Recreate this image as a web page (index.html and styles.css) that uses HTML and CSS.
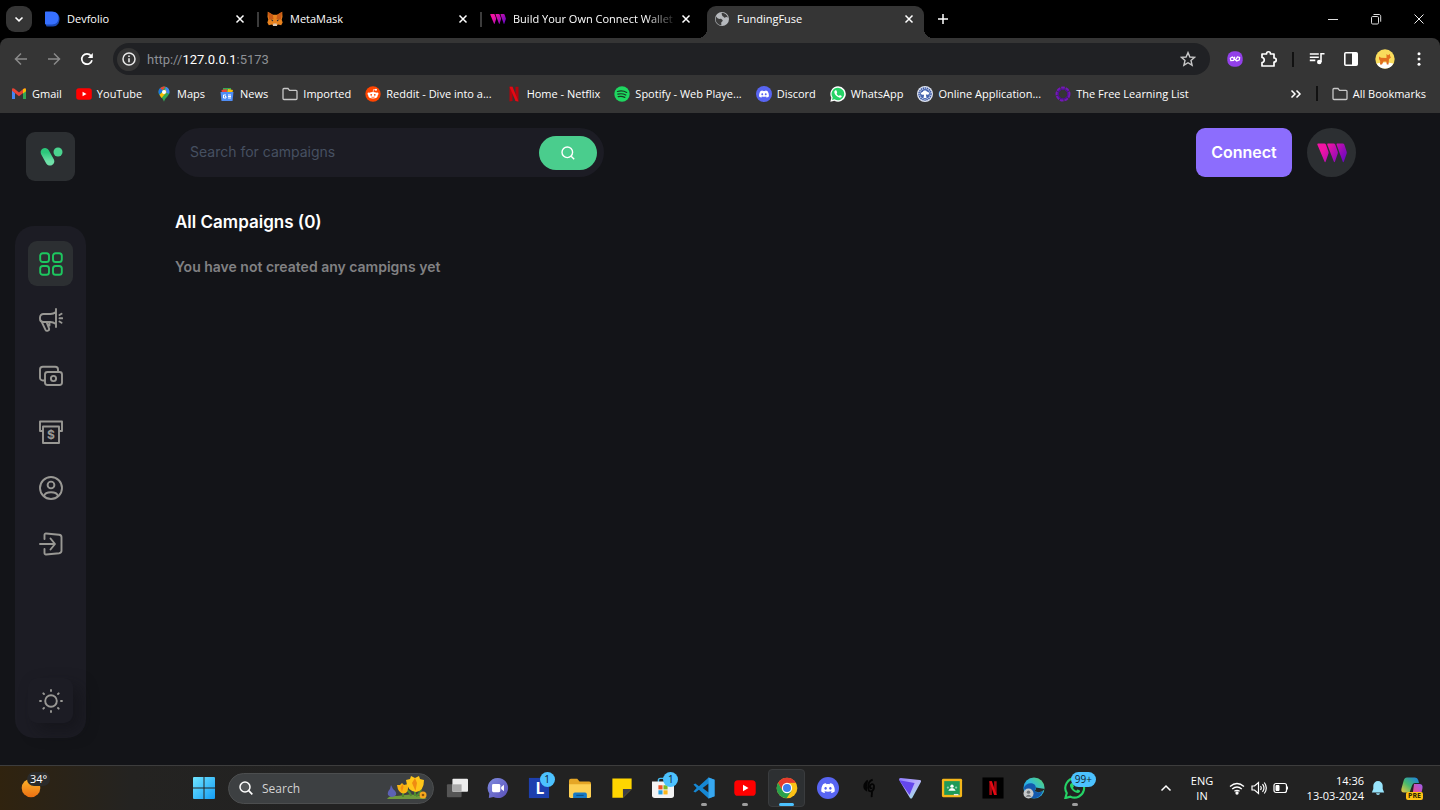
FILE: index.html
```html
<!DOCTYPE html>
<html lang="en">
<head>
<meta charset="utf-8">
<meta name="viewport" content="width=device-width, initial-scale=1">
<title>FundingFuse</title>
<link rel="stylesheet" href="styles.css">
</head>
<body>
<svg class="defs" aria-hidden="true">
  <defs>
    <linearGradient id="webg" x1="0" y1="0" x2="1" y2="1"><stop offset=".2" stop-color="#f213a4"/><stop offset="1" stop-color="#5204bf"/></linearGradient>
    <linearGradient id="webAll" gradientUnits="userSpaceOnUse" x1="3" y1="0" x2="29" y2="20"><stop offset=".2" stop-color="#f213a4"/><stop offset="1" stop-color="#5c06c4"/></linearGradient>
    <linearGradient id="vg" x1="0" y1="0" x2="0" y2="1"><stop offset="0" stop-color="#2bc77a"/><stop offset="1" stop-color="#6fe0a8"/></linearGradient>
    <linearGradient id="winG" x1="0" y1="0" x2="1" y2="1"><stop offset="0" stop-color="#6fe4ff"/><stop offset="1" stop-color="#149df5"/></linearGradient>
    <linearGradient id="moonG" x1="0" y1="0" x2="0" y2="1"><stop offset="0" stop-color="#fbb52a"/><stop offset="1" stop-color="#ec6f12"/></linearGradient>
    <linearGradient id="chatG" x1="0" y1="0" x2="1" y2="1"><stop offset="0" stop-color="#7f8cdf"/><stop offset="1" stop-color="#5a4fb8"/></linearGradient>
    <linearGradient id="edgeG" x1="0" y1="1" x2="1" y2="0"><stop offset="0" stop-color="#1479d4"/><stop offset=".5" stop-color="#2fb8e0"/><stop offset="1" stop-color="#58d868"/></linearGradient>
    <linearGradient id="copA" x1="0" y1="1" x2="1" y2="0"><stop offset="0" stop-color="#f5c83a"/><stop offset=".45" stop-color="#47b96d"/><stop offset="1" stop-color="#1b7fea"/></linearGradient>
    <linearGradient id="copB" x1="0" y1="1" x2="1" y2="0"><stop offset="0" stop-color="#f0663c"/><stop offset=".5" stop-color="#d74fa5"/><stop offset="1" stop-color="#9b5ff0"/></linearGradient>
    <linearGradient id="vpnG" x1="0" y1="0" x2="1" y2="1"><stop offset="0" stop-color="#8d7bff"/><stop offset=".5" stop-color="#b9aefc"/><stop offset="1" stop-color="#8ff0dc"/></linearGradient>
  </defs>
  <symbol id="close" viewBox="0 0 10 10"><path d="M1.500 1.500l7 7M8.500 1.500l-7 7" fill="none" stroke="currentColor" stroke-width="1.500"/></symbol>
  <symbol id="thirdweb" viewBox="0 0 30 20"><g fill="url(#webAll)"><path d="M1.500 .5h5.800c.8 0 1.300.4 1.600 1.100l2.500 6.800c.3.8.3 1.500 0 2.300l-2.800 8c-.2.600-.8.600-1 0L.4 1.700C.2 1 .7.500 1.500.5z"/><path d="M11.200.5h5.400c.8 0 1.300.4 1.600 1.100l2.500 6.800c.3.800.3 1.500 0 2.300l-2.800 8c-.2.600-.8.600-1 0L10.300 1.700c-.2-.7.200-1.200.9-1.200z"/><path d="M20.500.5h5.200c.8 0 1.300.4 1.600 1.100l2.300 6.800c.3.800.3 1.500 0 2.300l-2.800 8c-.2.600-.8.600-1 0L19.600 1.700c-.2-.7.200-1.200.9-1.200z"/></g></symbol>
  <symbol id="discord" viewBox="0 0 24 24"><circle cx="12" cy="12" r="12" fill="#5865f2"/><path fill="#fff" fill-rule="evenodd" d="M9.800 6.900C8.600 7 7.500 7.400 6.600 7.800 5 10.300 4.500 13 4.700 15.700c1.200.9 2.400 1.400 3.500 1.700l.8-1.300-1.200-.600.3-.2c2.500 1.100 5.300 1.100 7.800 0l.3.2-1.200.600.8 1.300c1.100-.3 2.300-.8 3.500-1.700.3-3-.4-5.600-1.900-7.900-.9-.4-2-.8-3.200-.9l-.5.900c-1.200-.2-2.200-.2-3.400 0zM9.400 14c-.8 0-1.400-.7-1.400-1.600s.6-1.600 1.400-1.600 1.400.7 1.400 1.600S10.200 14 9.400 14zm5.200 0c-.8 0-1.400-.7-1.400-1.600s.6-1.600 1.400-1.600 1.400.7 1.400 1.600-.6 1.600-1.400 1.600z"/></symbol>
  <symbol id="youtube" viewBox="0 0 24 18"><rect x=".3" y=".5" width="23.400" height="17" rx="4" fill="#f00"/><path d="M9.800 5.500v7l6-3.500z" fill="#fff"/></symbol>
  <symbol id="folder" viewBox="0 0 16 14"><path d="M1 2.500c0-.6.400-1 1-1h4l1.500 1.800H14c.6 0 1 .4 1 1V11.500c0 .6-.4 1-1 1H2c-.6 0-1-.4-1-1z" fill="none" stroke="#c7c7c7" stroke-width="1.300"/></symbol>
  <symbol id="phone" viewBox="0 0 24 24"><path d="M8.500 6.500c-.6 0-2 1-2 2.600 0 3.800 5 8.400 8.600 8.400 1.500 0 2.500-1.300 2.500-2.200 0-.4-2.700-1.800-3-1.600l-1.200 1.300c-1.600-.6-2.900-1.900-3.600-3.300l.9-1.200c.3-.4-.9-3.700-1.300-4z" fill="currentColor"/></symbol>
</svg>

<header class="browser">
  <div class="tabstrip">
    <button class="tab-search" aria-label="Search tabs"><svg viewBox="0 0 12 12" width="12" height="12"><path d="M2.500 4.500L6 7.800l3.500-3.300" fill="none" stroke="#fff" stroke-width="1.600"/></svg></button>
    <nav class="tabs" aria-label="Tabs">
      <div class="tab">
        <svg class="fav" viewBox="0 0 16 16"><path d="M2 2.500C2 1.500 2.500 1 3.500 1H9c4 0 6.500 3 6.500 7S13 15.500 9 15.500H3.500c-1 0-1.500-.5-1.500-1.500z" fill="#1b49b5"/><path d="M1 1.500C1 .8 1.300.5 2 .5h6c4 0 6.500 2.800 6.500 6.500S12 13.500 8 13.500H2c-.7 0-1-.3-1-1z" fill="#3770ff"/></svg>
        <button class="tab-title">Devfolio</button>
        <button class="tab-close" aria-label="Close Devfolio"><svg><use href="#close"/></svg></button>
      </div>
      <div class="tab divided">
        <svg class="fav" viewBox="0 0 16 16"><path d="M.8.8l5 3h4.400l5-3 .3 5-.8 3 1 2.700-1.500 2.700-3.200-.7-1.300 1.200H6.300L5 13.500l-3.200.7L.3 11.500l1-2.700-.8-3z" fill="#e8821e"/><path d="M.8.8l5 3L6.500 8 2 8.500zM15.200.8l-5 3L9.500 8l4.500.5z" fill="#c85a16"/><path d="M3.500 8.500l2.700.5-.4 1.500zM12.500 8.500L9.800 9l.4 1.500z" fill="#262b35"/><path d="M6.300 12.600h3.400l.4 2.300H5.900z" fill="#d9c8b8"/></svg>
        <button class="tab-title">MetaMask</button>
        <button class="tab-close" aria-label="Close MetaMask"><svg><use href="#close"/></svg></button>
      </div>
      <div class="tab divided">
        <svg class="fav"><use href="#thirdweb"/></svg>
        <button class="tab-title faded">Build Your Own Connect Wallet</button>
        <button class="tab-close" aria-label="Close Build Your Own Connect Wallet"><svg><use href="#close"/></svg></button>
      </div>
      <div class="tab active">
        <svg class="fav" viewBox="0 0 16 16"><circle cx="8" cy="8" r="7" fill="#b6b9bd"/><path d="M2.200 5.500c1.500 2.300 3 2.700 4.800 2.300.8 1 1.800.7 1.700 2-.1 1-1.500.8-1.500 2.200 0 .8.300 1.500.2 2.200C4 14 1.700 11.500 1.700 8zM8 1.700c-1 1.300.2 1.500.2 2.700 0 1 1 .6 1.500 1.600.4.900 1.300.8 2 .3.600-.5 1.300 0 2.200.2C13.300 3.800 11 1.800 8 1.700z" fill="#3c3c3c"/></svg>
        <button class="tab-title" aria-current="page">FundingFuse</button>
        <button class="tab-close" aria-label="Close FundingFuse"><svg><use href="#close"/></svg></button>
      </div>
    </nav>
    <button class="new-tab" aria-label="New tab"><svg viewBox="0 0 12 12" width="12" height="12"><path d="M6 1v10M1 6h10" stroke="#fff" stroke-width="1.500"/></svg></button>
    <div class="window-controls">
      <button aria-label="Minimize"><svg viewBox="0 0 12 12" width="12" height="12"><path d="M1 6.500h10" stroke="#ddd"/></svg></button>
      <button aria-label="Restore"><svg viewBox="0 0 12 12" width="12" height="12" fill="none" stroke="#ddd"><rect x="1.500" y="3.500" width="7" height="7.500" rx="1.200"/><path d="M3.500 1.500H9c1 0 1.700.7 1.700 1.700v5.500"/></svg></button>
      <button aria-label="Close window"><svg viewBox="0 0 12 12" width="12" height="12"><path d="M1.500 1.500l9 9M10.500 1.500l-9 9" stroke="#eee"/></svg></button>
    </div>
  </div>

  <div class="toolbar">
    <button class="tool dim" aria-label="Back"><svg viewBox="0 0 14 14" width="14" height="14"><path d="M13 7H2M7 1.500L1.500 7 7 12.500" fill="none" stroke="currentColor" stroke-width="1.500"/></svg></button>
    <button class="tool dim" aria-label="Forward"><svg viewBox="0 0 14 14" width="14" height="14"><path d="M1 7h11M7 1.500L12.500 7 7 12.500" fill="none" stroke="currentColor" stroke-width="1.500"/></svg></button>
    <button class="tool" aria-label="Reload"><svg viewBox="0 0 14 14" width="14" height="14"><path d="M12 8.300A5.200 5.200 0 1 1 11 3.700" fill="none" stroke="#fff" stroke-width="1.700"/><path d="M12.800 1v5H7.800z" fill="#fff"/></svg></button>
    <div class="omnibox">
      <button class="site-info" aria-label="Site information"><svg viewBox="0 0 14 14" width="14" height="14"><circle cx="7" cy="7" r="6" fill="none" stroke="#e8e8e8" stroke-width="1.500"/><path d="M7 6.200v4M7 3.600v1.500" stroke="#e8e8e8" stroke-width="1.600"/></svg></button>
      <div class="url" role="textbox" contenteditable="true" spellcheck="false" aria-label="Address">http://<span class="host">127.0.0.1</span>:5173</div>
      <button class="star" aria-label="Bookmark"><svg viewBox="0 0 16 16" width="16" height="16"><path d="M8 1.600l1.900 4.400 4.700.4L11 9.500l1.100 4.700L8 11.700l-4.100 2.500L5 9.500 1.400 6.400l4.700-.4z" fill="none" stroke="#c7c7c7" stroke-width="1.400"/></svg></button>
    </div>
    <div class="extensions">
      <button aria-label="Polygon extension"><svg viewBox="0 0 16 16" width="16" height="16"><rect x=".3" y=".3" width="15.400" height="15.400" rx="6.500" fill="#9340ea"/><path d="M7.800 5.800L6.600 9.500 3.800 9.700 3.300 7.200 5.300 6l4.500 4 2.600-1.200.2-2.300-2.200-.6-2.200 3.700" fill="none" stroke="#fff" stroke-width="1.200"/></svg></button>
      <button aria-label="Extensions"><svg viewBox="0 0 18 18" width="18" height="18"><path d="M2 4h4.500c0-3 4-3 4 0H14v4c3 0 3 4 0 4v4H2v-3.500c3-.3 3-4.700 0-5z" fill="none" stroke="#fff" stroke-width="1.700" stroke-linejoin="round"/></svg></button>
      <span class="rule"></span>
      <button aria-label="Media controls"><svg viewBox="0 0 16 16" width="16" height="16"><path d="M.8 3h9M.8 6.200h9M.8 9.400h5.500M12 11V2.700h3.500" fill="none" stroke="#fff" stroke-width="1.600"/><circle cx="10.300" cy="11" r="2.300" fill="#fff"/></svg></button>
      <button aria-label="Side panel"><svg viewBox="0 0 16 16" width="16" height="16"><rect x="1.800" y="1.800" width="12.400" height="12.400" rx="1" fill="none" stroke="#fff" stroke-width="1.600"/><path d="M9 2h5v12H9z" fill="#fff"/></svg></button>
      <button aria-label="Profile"><svg viewBox="0 0 20 20" width="20" height="20"><circle cx="10" cy="10" r="9.700" fill="#f9dc5c"/><path d="M1.500 14.500a9.700 9.700 0 0 0 17 0c-4-1.500-13-1.500-17 0z" fill="#fff"/><path d="M4 7.500l2 1.300 5.500.2V5l1.500 1.200L15 5v2l1 1.500-2 1.500-.5 5.500h-1.700l-.5-3H8.500L7 15.500H5L5.200 12 4 10z" fill="#e2701f"/></svg></button>
      <button aria-label="Menu"><svg viewBox="0 0 16 16" width="16" height="16" fill="#fff"><circle cx="8" cy="2.800" r="1.500"/><circle cx="8" cy="8" r="1.500"/><circle cx="8" cy="13.200" r="1.500"/></svg></button>
    </div>
  </div>

  <nav class="bookmarks" aria-label="Bookmarks">
    <a href="#"><svg viewBox="0 0 16 16"><path d="M1 4v9h3V7z" fill="#4285f4"/><path d="M15 4v9h-3V7z" fill="#34a853"/><path d="M1 3.500C1 2 2.500 2 3.500 2.800L8 6.500l4.500-3.700c1-.8 2.500-.8 2.500.7v1.300L8 10.200 1 4.800z" fill="#ea4335"/><path d="M12 3.300c1.500-1.200 3-.9 3 .7v1.200l-3 2.300z" fill="#fbbc04"/></svg>Gmail</a>
    <a href="#"><svg><use href="#youtube"/></svg>YouTube</a>
    <a href="#"><svg viewBox="0 0 16 16"><path d="M8 .5a5.500 5.500 0 0 0-5.500 5.700c0 3.500 4.200 5 5.500 9.500 1.300-4.500 5.500-6 5.500-9.500A5.500 5.500 0 0 0 8 .5z" fill="#34a853"/><path d="M4 2.300A5.500 5.500 0 0 1 9.500.7L6 4.800z" fill="#ea4335"/><path d="M4 2.300C2 4.300 2.200 6.800 3.500 8.800L7 4.600z" fill="#1a73e8"/><path d="M9.600.8c3 .8 4.500 4 3.500 7L9 6.500z" fill="#4285f4"/><path d="M3.500 8.800l6-5.500 1 3L5.500 12z" fill="#fbbc04"/><circle cx="8" cy="6" r="2" fill="#fff"/></svg>Maps</a>
    <a href="#"><svg viewBox="0 0 16 16"><path d="M4 2h8v5H4z" fill="#34a853"/><path d="M9 3l5 1-1 4H8z" fill="#fbbc04"/><path d="M2.500 4l5-1 1 5H3z" fill="#ea4335"/><path d="M1.500 6h13l-1 9h-11z" fill="#4f8df5"/><path d="M7 9H4.500v3H7v-1.500H6M9 9h3M9 10.500h3M9 12h3" fill="none" stroke="#fff"/></svg>News</a>
    <a href="#"><svg><use href="#folder"/></svg>Imported</a>
    <a href="#"><svg viewBox="0 0 16 16"><circle cx="8" cy="8" r="7.700" fill="#ff4500"/><ellipse cx="8" cy="9.300" rx="4.700" ry="3.200" fill="#fff"/><circle cx="3.700" cy="7.800" r="1.200" fill="#fff"/><circle cx="12.300" cy="7.800" r="1.200" fill="#fff"/><circle cx="11" cy="3.800" r="1" fill="#fff"/><path d="M8 6.500l.6-3 2.200.4" fill="none" stroke="#fff" stroke-width=".7"/><circle cx="6.200" cy="8.800" r=".9" fill="#ff4500"/><circle cx="9.800" cy="8.800" r=".9" fill="#ff4500"/><path d="M6.300 11q1.700.9 3.400 0" fill="none" stroke="#ff4500" stroke-width=".7"/></svg>Reddit - Dive into a...</a>
    <a href="#"><svg viewBox="0 0 16 16"><path d="M3.500.8h3V15l-3 .5zM9.500.8h3v14.700L9.500 15z" fill="#b1060f"/><path d="M3.500.8h3l6 14.700-3-.5z" fill="#e50914"/></svg>Home - Netflix</a>
    <a href="#"><svg viewBox="0 0 16 16"><circle cx="8" cy="8" r="7.700" fill="#1ed760"/><path d="M3.400 5.500c3-.9 6.600-.6 9.300.9M3.800 8.200c2.700-.8 5.600-.5 8 .8M4.200 10.700c2.300-.6 4.600-.4 6.600.7" fill="none" stroke="#173b22" stroke-width="1.200" stroke-linecap="round"/></svg>Spotify - Web Playe...</a>
    <a href="#"><svg><use href="#discord"/></svg>Discord</a>
    <a href="#"><svg viewBox="0 0 24 24"><path d="M12 .5A11.500 11.500 0 0 0 2 17.700L.5 23.500l6-1.500A11.500 11.500 0 1 0 12 .5z" fill="#fff"/><path d="M12 2.500A9.500 9.500 0 0 0 4 17.300L3 21l3.700-1A9.500 9.500 0 1 0 12 2.500z" fill="#25d366"/><use href="#phone" color="#fff"/></svg>WhatsApp</a>
    <a href="#"><svg viewBox="0 0 16 16"><circle cx="8" cy="8" r="8" fill="#dfe5f2"/><circle cx="8" cy="8" r="6" fill="none" stroke="#3c58a6" stroke-width="1.500" stroke-dasharray="1.500 .6"/><circle cx="8" cy="8" r="5" fill="#4563ae"/><path d="M3.800 8c0-1.500 1.500-2 2-2 .5-1.700 3.500-2 4.200-.2 1.500-.2 2.300 1 2.200 2.200-1 1-2.500.6-3.300.6L9.500 12h-3l.6-3.300c-1 0-2.500.2-3.300-.7z" fill="#fff"/></svg>Online Application...</a>
    <a href="#"><svg viewBox="0 0 16 16"><circle cx="8" cy="8" r="6" fill="none" stroke="#7417b8" stroke-width="3" stroke-dasharray="3.500 .8"/><circle cx="8" cy="8" r="5" fill="none" stroke="#4b1190" stroke-width="1.200"/></svg>The Free Learning List</a>
    <div class="bookmarks-end">
      <button aria-label="More bookmarks"><svg viewBox="0 0 12 12" width="12" height="12"><path d="M1.500 2.500L5 6 1.500 9.500M6.500 2.500L10 6 6.500 9.500" fill="none" stroke="#fff" stroke-width="1.500"/></svg></button>
      <span class="rule"></span>
      <a href="#"><svg><use href="#folder"/></svg>All Bookmarks</a>
    </div>
  </nav>
</header>

<div class="app">
  <aside class="side">
    <a class="logo" href="#" aria-label="Home"><svg viewBox="0 0 24 20" width="24" height="20"><path d="M6 5.300l5 9" stroke="url(#vg)" stroke-width="8.600" stroke-linecap="round"/><circle cx="19" cy="5" r="4.500" fill="#4bd38f"/></svg></a>
    <nav class="rail" aria-label="Main">
      <a class="tile on" href="#" aria-label="Dashboard"><svg viewBox="0 0 24 24"><rect x="1.200" y="1.200" width="8.800" height="8.800" rx="2.600"/><rect x="14" y="1.200" width="8.800" height="8.800" rx="2.600"/><rect x="1.200" y="14" width="8.800" height="8.800" rx="2.600"/><rect x="14" y="14" width="8.800" height="8.800" rx="2.600"/></svg></a>
      <a class="tile" href="#" aria-label="Campaigns"><svg viewBox="0 0 24 24"><path d="M17 1v18M17 4c-2 1.500-3.500 2-5.500 2H4.500C2.500 6 1 7.500 1 9.500v1.500C1 13 2.500 14 4.500 14h7c2 0 3.500.7 5.500 2M2.500 13.500l4 8.300c1 2 4.300.8 3.500-1.500L7.500 14M10.500 14v3.500l-2.200-1.500M20.500 7l2-1.200M20.500 10.300h2.800M20.500 13.500l2 1.200"/></svg></a>
      <a class="tile" href="#" aria-label="Payment"><svg viewBox="0 0 24 24"><path d="M6 16.500H3.800C2.200 16.500 1 15.300 1 13.700V5.500C1 4 2.200 2.700 3.800 2.700h12.500C17.800 2.700 19 4 19 5.500V8"/><rect x="6" y="8" width="17" height="13" rx="2.500"/><circle cx="14.500" cy="14.500" r="2.600"/></svg></a>
      <a class="tile" href="#" aria-label="Withdraw"><svg viewBox="0 0 24 24"><path d="M4 11H1V1.500h22V11h-3M4 6.500h16V23H4z"/><text x="12" y="19">$</text></svg></a>
      <a class="tile" href="#" aria-label="Profile"><svg viewBox="0 0 24 24"><circle cx="12" cy="12" r="11"/><circle cx="12" cy="9" r="3.400"/><path d="M5 20c1.500-5 12.500-5 14 0"/></svg></a>
      <a class="tile" href="#" aria-label="Logout"><svg viewBox="0 0 24 24"><path d="M5.500 7V3c0-1 .6-1.600 1.600-1.500l13 1.300c1.500.2 2.400 1 2.400 2.400v13.600c0 1.400-.9 2.200-2.400 2.400l-13 1.300c-1 .1-1.600-.5-1.600-1.500v-4M1 12h14.500M11.500 6.500L16 12l-4.500 5.500"/></svg></a>
      <button class="tile theme" aria-label="Toggle theme"><svg viewBox="0 0 24 24"><circle cx="12" cy="12" r="5.800"/><path d="M12 1v1M12 22v1M1 12h1M22 12h1M4.300 4.300l.7.7M19 19l.7.7M4.300 19.700L5 19M19 5l.7-.7"/></svg></button>
    </nav>
  </aside>
  <main class="content">
    <div class="topbar">
      <form class="search" role="search">
        <input type="text" placeholder="Search for campaigns" aria-label="Search for campaigns">
        <button type="button" aria-label="Search"><svg viewBox="0 0 14 14" width="14" height="14"><circle cx="6.300" cy="6.300" r="5.300" fill="none" stroke="#fff" stroke-width="1.400"/><path d="M10.200 10.200l3 3" stroke="#fff" stroke-width="1.400"/></svg></button>
      </form>
      <div class="account">
        <button class="connect">Connect</button>
        <a class="avatar" href="#" aria-label="Profile"><svg width="30" height="20"><use href="#thirdweb"/></svg></a>
      </div>
    </div>
    <h1>All Campaigns (0)</h1>
    <p>You have not created any campigns yet</p>
  </main>
</div>

<footer class="taskbar">
  <button class="weather" aria-label="Weather"><svg viewBox="0 0 20 20" width="20" height="20"><circle cx="10" cy="10" r="9.300" fill="url(#moonG)"/></svg><span class="temp">34°</span></button>
  <button class="start" aria-label="Start"><svg viewBox="0 0 22 22" width="22" height="22" fill="url(#winG)"><path d="M0 1Q0 0 1 0h9.500v10.500H0zM11.500 0H21q1 0 1 1v9.500H11.500zM0 11.500h10.500V22H1q-1 0-1-1zM11.500 11.500H22V21q0 1-1 1h-9.500z"/></svg></button>
  <label class="os-search">
    <svg viewBox="0 0 14 14" width="14" height="14"><circle cx="6" cy="6" r="5" fill="#55585a" stroke="#fff" stroke-width="1.500"/><path d="M9.700 9.700l3.600 3.600" stroke="#fff" stroke-width="1.700"/></svg>
    <input type="text" placeholder="Search" aria-label="Search">
    <svg viewBox="0 0 40 24" width="40" height="24"><path d="M0 23q3-4 10-3l8-1q10-2 22 4z" fill="#6f9a3c"/><path d="M16 21V14M28 20V11M24 20q-1-5-5-6M29 20q4-2 5-7" stroke="#4f8a2e" stroke-width="2" fill="none"/><path d="M10 9l3 0 2-2 2 2 4-1q1 9-4 9.500-6 0-7-8.500z" fill="#f9b512"/><path d="M19 4l4-1 1-3 4 2 4-2 1 3 4 1q0 11-8 12-9-1-10-12z" fill="#ffc61a"/><path d="M28 2l2 5-1.500 8L25 7zM15.500 8l1 3-1.500 5-1.500-4z" fill="#f08c12"/><path d="M4 9l2 4q4 3 3 6-4 4-8 0-1-3 2-6z" fill="#5d62b4"/><circle cx="36" cy="19" r="3.500" fill="#f6a81c"/><circle cx="36" cy="19" r="1.300" fill="#8b5410"/></svg>
  </label>
  <nav class="apps" aria-label="Pinned apps">
    <button aria-label="Task view"><svg viewBox="0 0 24 24"><rect x="1" y="8" width="16" height="14" rx="1" fill="#555"/><rect x="7" y="2" width="17" height="14" rx="1" fill="#ededed"/><path d="M7 8h10v8H7z" fill="#aaa"/></svg></button>
    <button aria-label="Chat"><svg viewBox="0 0 24 24"><path d="M12 1a11 11 0 1 1-5 20.800L2 23l.5-5A11 11 0 0 1 12 1z" fill="url(#chatG)"/><rect x="5.500" y="7.500" width="9" height="9" rx="1.500" fill="#fff"/><path d="M15.500 11l3-2.500v7l-3-2.500z" fill="#fff"/></svg></button>
    <button aria-label="Lenovo"><svg viewBox="0 0 24 24"><path d="M1 1h22v22H1z" fill="#1d3fae"/><text class="ell" x="13" y="18">L</text></svg><span class="badge">1</span></button>
    <button aria-label="File Explorer"><svg viewBox="0 0 24 24"><path d="M0 4q0-2 2-2h7l2.500 3H22q2 0 2 2v14H0z" fill="#e5a626"/><path d="M0 8h24v13q0 2-2 2H2q-2 0-2-2z" fill="#fdd054"/><path d="M4.500 23v-4q0-2 2-2h11q2 0 2 2v4z" fill="#1679c5"/><path d="M8 20h8" stroke="#0b4776"/></svg></button>
    <button aria-label="Sticky Notes"><svg viewBox="0 0 24 24"><path d="M1.500 1.500h21v11.500l-9.500 9.500H1.500z" fill="#ffd500"/><path d="M13 13h9.500L13 22.500z" fill="#3b3c48"/></svg></button>
    <button aria-label="Store"><svg viewBox="0 0 24 24"><path d="M7 6V3.500Q7 1.500 9 1.500h6q2 0 2 2V6" fill="none" stroke="#43bdf2" stroke-width="1.600"/><path d="M0 5h24v15q0 3-3 3H3q-3 0-3-3z" fill="#f3f3f3"/><path d="M7 9h4.500v4.500H7z" fill="#ed5126"/><path d="M12.500 9H17v4.500h-4.500z" fill="#7cba27"/><path d="M7 14.500h4.500V19H7z" fill="#239fe2"/><path d="M12.500 14.500H17V19h-4.500z" fill="#fbb61a"/></svg><span class="badge">1</span></button>
    <button class="running" aria-label="Visual Studio Code"><svg viewBox="0 0 24 24"><path d="M17 .5L23.500 3v18L17 23.500 6.500 14 2.500 17 .5 15.800 4 12 .5 8.200 2.500 7l4 3zM17 7l-6.500 5 6.500 5z" fill="#1688d4" fill-rule="evenodd"/><path d="M17 .5L23.500 3v18L17 23.500z" fill="#37a7ef"/></svg></button>
    <button class="running" aria-label="YouTube"><svg><use href="#youtube"/></svg></button>
    <button class="running current" aria-label="Chrome"><svg viewBox="0 0 24 24"><circle cx="12" cy="12" r="11.300" fill="#fbc116"/><path d="M2.200 6.400A11.300 11.300 0 0 1 21.800 6.400L12 6.500l-5 8.300z" fill="#e53b2d"/><path d="M2.200 6.400A11.300 11.300 0 0 0 11.500 23.300L17 15 7 14.800z" fill="#2aa14c"/><circle cx="12" cy="12" r="5.600" fill="#fff"/><circle cx="12" cy="12" r="4.400" fill="#3b7ded"/></svg></button>
    <button aria-label="Discord"><svg><use href="#discord"/></svg></button>
    <button aria-label="Quill"><svg viewBox="0 0 24 24"><path d="M10 3q-5 4-4 9 1 3 4 4-1-7 1-12z" fill="#040404"/><path d="M16 3c-5 1-6 9-4 12 3 2 6-1 5.500-5S13 8 13 10.500s2 2 2 1M15 15c1 2-.5 4 0 7" fill="none" stroke="#040404" stroke-width="2"/></svg></button>
    <button aria-label="VPN"><svg viewBox="0 0 24 24"><path d="M2 1l20.500 2.200q2.500.3 1.200 2.500L14.500 22.500q-1.300 2-2.700 0L.3 3.500Q-.5 1 2 1z" fill="url(#vpnG)"/><path d="M.3 3.500L17 6.500l-5.500 13z" fill="#6446ec"/></svg></button>
    <button aria-label="Classroom"><svg viewBox="0 0 24 24"><rect x="1" y="2" width="22" height="20" rx="1.500" fill="#f4b61a"/><path d="M3.500 4.500h17v15h-17z" fill="#1e9a58"/><circle cx="12" cy="10" r="1.800" fill="#fff"/><path d="M8 15q1-3 4-3t4 3z" fill="#fff"/><circle cx="7.500" cy="11.500" r="1.200" fill="#8fd0ae"/><circle cx="16.500" cy="11.500" r="1.200" fill="#8fd0ae"/><path d="M14 18.500h5v1.500h-5z" fill="#e8e8e8"/></svg></button>
    <button aria-label="Netflix"><svg viewBox="0 0 24 24"><path d="M.5.5h23v23H.5z" fill="#000"/><path d="M8 4.500h2.800v15H8zM13.200 4.500H16v15h-2.800z" fill="#a7070f"/><path d="M8 4.500h2.800L16 19.500h-2.800z" fill="#e50914"/></svg></button>
    <button aria-label="Edge"><svg viewBox="0 0 24 24"><circle cx="12" cy="12" r="11.500" fill="url(#edgeG)"/><path d="M1 12c2-7 13-7 13-.5 0 2-1.500 2.500-1 3.500 1.500 2.500 7 2 9-.3C19.500 23 12 25 6 21z" fill="#1359ad"/><path d="M14 11.500c.5 3-1.500 3-1 3.500 2 2.500 7 2 10-1l1-1z" fill="#272727"/><circle cx="6" cy="18" r="5.500" fill="#c5c8ca"/><circle cx="6" cy="16.500" r="1.900" fill="#6d7174"/><path d="M2.800 21.500q3.200-4.500 6.400 0z" fill="#6d7174"/></svg></button>
    <button class="running" aria-label="WhatsApp"><svg viewBox="0 0 24 24"><path d="M12 1.500A10.500 10.500 0 0 0 3 17.500L1.500 23l5.500-1.500A10.500 10.500 0 1 0 12 1.500z" fill="none" stroke="#25d366" stroke-width="2.300"/><use href="#phone" color="#25d366"/></svg><span class="badge wide">99+</span></button>
  </nav>
  <div class="tray">
    <button class="chevron" aria-label="Hidden icons"><svg viewBox="0 0 12 12" width="12" height="12"><path d="M1.500 8.500L6 4l4.500 4.500" fill="none" stroke="#fff" stroke-width="1.500"/></svg></button>
    <button class="lang">ENG<br>IN</button>
    <button class="status" aria-label="Network, volume and battery">
      <svg viewBox="0 0 16 16" width="16" height="16" fill="none" stroke="#fff" stroke-width="1.300"><path d="M1 6.500q7-6 14 0M3.200 9q4.800-4 9.600 0M5.400 11.300q2.600-2 5.200 0"/><circle cx="8" cy="13" r="1" fill="#fff"/></svg>
      <svg viewBox="0 0 16 16" width="16" height="16" fill="none" stroke="#fff" stroke-width="1.200"><path d="M1 6v4h2.500L7.500 13.500v-11L3.500 6zM9.500 6q1.500 2 0 4M11.500 4.200q3 3.800 0 7.600M13.300 2.500q4 5.500 0 11"/></svg>
      <svg viewBox="0 0 16 16" width="16" height="16"><rect x="1" y="3.500" width="12.500" height="9" rx="2" fill="none" stroke="#fff" stroke-width="1.200"/><path d="M3 5.500h3v5H3zM14.500 6.500v3" fill="#fff" stroke="#fff"/></svg>
    </button>
    <button class="clock"><time datetime="2024-03-13T14:36">14:36<br>13-03-2024</time></button>
    <button class="bell" aria-label="Notifications"><svg viewBox="0 0 14 16" width="14" height="16"><path d="M7 1a4.700 4.700 0 0 0-4.700 4.700V9L.8 12.500h12.400L11.700 9V5.700A4.700 4.700 0 0 0 7 1zM5 13.300h4Q8.800 15 7 15T5 13.300z" fill="#98e4fc"/></svg></button>
    <button class="copilot" aria-label="Copilot"><svg viewBox="0 0 24 24" width="24" height="24"><path d="M7 1.500h8q2.500 0 3.200 2.500l.8 3h-4q-2 0-2.700 2L9.500 16.500H4q-3.500 0-2.500-4l2.200-8Q4.500 1.500 7 1.500z" fill="url(#copA)"/><path d="M14 8h5.500q3.500 0 3 4l-1.500 7q-.7 3-3.500 3h-8q2.500-.5 3-3z" fill="url(#copB)"/></svg><span class="pre">PRE</span></button>
  </div>
</footer>
</body>
</html>
```

FILE: styles.css
```css
* { box-sizing: border-box; }

body {
  margin: 0;
  min-height: 100vh;
  display: flex;
  flex-direction: column;
  background: #131418;
  color: #fff;
  font-family: "Open Sans", "Noto Sans", sans-serif;
  font-size: 11px;
}

button {
  display: flex;
  align-items: center;
  justify-content: center;
  padding: 0;
  border: 0;
  background: none;
  color: inherit;
  font: inherit;
}

a { color: inherit; text-decoration: none; }
svg { display: block; flex: none; }
.defs { position: absolute; width: 0; height: 0; }

/* Browser window */
.browser { background: #000; }

.tabstrip { display: flex; height: 38px; padding-left: 6px; }
.tab-search {
  width: 26px;
  height: 26px;
  margin-top: 6px;
  border-radius: 9px;
  background: #353535;
}
.tabs { display: flex; margin-left: 2px; }
.tab {
  position: relative;
  display: flex;
  align-items: center;
  width: 223px;
  padding: 0 9px 1px 10px;
}
.tab .fav { width: 16px; height: 16px; margin-right: 7px; }
.tab.divided::before {
  content: "";
  position: absolute;
  left: 0;
  top: 12px;
  width: 2px;
  height: 15px;
  background: #3c3c3c;
}
.tab-title {
  flex: 1;
  min-width: 0;
  justify-content: flex-start;
  white-space: nowrap;
}
.tab-title.faded {
  -webkit-mask-image: linear-gradient(90deg, #000 80%, transparent);
  mask-image: linear-gradient(90deg, #000 80%, transparent);
}
.tab-close { width: 16px; height: 16px; }
.tab-close svg { width: 10px; height: 10px; }
.tab.active {
  width: 217px;
  margin: 6px 0 0 4px;
  padding: 0 7px 7px 7px;
  border-radius: 9px 9px 0 0;
  background: #353535;
}
.tab.active::before,
.tab.active::after {
  content: "";
  position: absolute;
  bottom: 0;
  width: 9px;
  height: 9px;
}
.tab.active::before { right: 100%; background: radial-gradient(circle at 0 0, #000 9px, #353535 9px); }
.tab.active::after { left: 100%; background: radial-gradient(circle at 100% 0, #000 9px, #353535 9px); }
.new-tab { width: 38px; }
.window-controls { display: flex; margin-left: auto; }
.window-controls button { width: 43px; }

.toolbar {
  display: flex;
  align-items: center;
  height: 42px;
  padding: 0 8px 0 4px;
  border-radius: 8px 8px 0 0;
  background: #353535;
}
.tool { width: 33px; height: 32px; color: #fff; }
.tool.dim { color: #8a8a8a; }
.omnibox {
  display: flex;
  flex: 1;
  align-items: center;
  height: 32px;
  margin-left: 10px;
  padding: 0 14px 0 4px;
  border-radius: 16px;
  background: #202124;
}
.site-info { width: 23px; height: 23px; border-radius: 50%; background: #353535; }
.url { flex: 1; margin-left: 7px; color: #8d9095; font: 13px Roboto, sans-serif; outline: none; }
.host { color: #fff; }
.extensions { display: flex; align-items: center; gap: 8px; margin-left: 12px; }
.extensions button { width: 26px; height: 28px; }
.rule { width: 2px; height: 15px; background: #111; }
.extensions .rule { margin: 0 2px; }

.bookmarks {
  display: flex;
  align-items: center;
  gap: 14px;
  height: 33px;
  padding: 0 14px 6px 11px;
  background: #353535;
  white-space: nowrap;
}
.bookmarks a { display: flex; align-items: center; gap: 5px; }
.bookmarks a svg { width: 16px; height: 16px; }
.bookmarks-end { display: flex; align-items: center; gap: 14px; margin-left: auto; }

/* Application */
.app {
  display: flex;
  flex: 1;
  gap: 89px;
  padding: 15px 84px 27px 15px;
  font-family: Inter, "Open Sans", sans-serif;
}
.side { display: flex; flex-direction: column; align-items: center; width: 71px; }
.logo {
  display: flex;
  align-items: center;
  justify-content: center;
  width: 49px;
  height: 49px;
  margin: 4px 0 45px;
  border-radius: 9px;
  background: #2c2f32;
}
.rail {
  display: flex;
  flex: 1;
  flex-direction: column;
  align-items: center;
  gap: 11px;
  width: 100%;
  padding: 15px 0;
  border-radius: 19px;
  background: #1c1c24;
}
.tile {
  display: flex;
  align-items: center;
  justify-content: center;
  width: 45px;
  height: 45px;
  border-radius: 9px;
  color: #999894;
}
.tile svg {
  width: 24px;
  height: 24px;
  fill: none;
  stroke: currentColor;
  stroke-width: 1.9px;
  stroke-linecap: round;
  stroke-linejoin: round;
}
.tile text { fill: currentColor; stroke: none; font-size: 12px; font-weight: 700; text-anchor: middle; }
.tile.on { background: #2c2f32; color: #1dc75f; }
.tile.theme { margin-top: auto; background: #1c1c24; box-shadow: 8px 8px 16px rgba(16, 16, 20, .5); }

.content { flex: 1; min-width: 0; }
.topbar { display: flex; justify-content: space-between; }
.search {
  display: flex;
  align-items: center;
  flex: 0 1 429px;
  height: 49px;
  padding: 0 7px 0 15px;
  border-radius: 25px;
  background: #1c1c24;
}
.search input {
  flex: 1;
  min-width: 0;
  padding: 0 0 2px;
  border: 0;
  outline: 0;
  background: none;
  color: #fff;
  font: 14px Inter, sans-serif;
}
.search input::placeholder { color: #465061; }
.search button { width: 58px; height: 34px; border-radius: 17px; background: #4acd8d; }
.account { display: flex; gap: 15px; }
.connect {
  width: 96px;
  height: 49px;
  padding-bottom: 2px;
  border-radius: 9px;
  background: #8c6dfd;
  font-size: 16px;
  font-weight: 600;
}
.avatar {
  display: flex;
  align-items: center;
  justify-content: center;
  width: 49px;
  height: 49px;
  border-radius: 50%;
  background: #2c2f32;
}
.content h1 { margin: 33px 0 0; font-size: 17px; font-weight: 600; line-height: 24px; }
.content p { margin: 21px 0 0; color: #818183; font-size: 14px; font-weight: 600; line-height: 24px; }

/* Desktop taskbar */
.taskbar {
  display: flex;
  align-items: center;
  height: 45px;
  padding: 0 16px;
  border-top: 1px solid #3d3d3d;
  background: linear-gradient(90deg, #30230f, #242321 130px, #222 300px);
}
.weather { position: relative; width: 30px; height: 40px; }
.temp {
  position: absolute;
  left: 11px;
  top: 4px;
  padding: 0 3px;
  border-radius: 7px;
  background: #2b2b2b;
  font-size: 11px;
  line-height: 14px;
}
.start { width: 22px; margin-left: 147px; }
.os-search {
  display: flex;
  align-items: center;
  gap: 9px;
  width: 206px;
  height: 31px;
  margin-left: 13px;
  padding: 0 6px 0 10px;
  border: 1px solid #4c4e4f;
  border-radius: 16px;
  background: #3d4042;
}
.os-search input {
  flex: 1;
  min-width: 0;
  padding: 0;
  border: 0;
  outline: 0;
  background: none;
  color: #fff;
  font: 12px "Open Sans", sans-serif;
}
.os-search input::placeholder { color: #d3d3d3; }
.apps { display: grid; grid-template-columns: repeat(16, 1fr); width: 660px; margin-left: 2px; }
.apps button { position: relative; height: 40px; }
.apps svg { width: 22px; height: 22px; }
.ell { fill: #fff; font-size: 17px; font-weight: 700; text-anchor: middle; }
.badge {
  position: absolute;
  left: 21px;
  top: 4px;
  min-width: 15px;
  padding: 0 4px;
  border-radius: 8px;
  background: #4cc2ff;
  color: #10222c;
  font-size: 10px;
  line-height: 15px;
}
.badge.wide { left: 16px; }
.running::after {
  content: "";
  position: absolute;
  bottom: 2px;
  width: 6px;
  height: 3px;
  border-radius: 2px;
  background: #9d9d9d;
}
.current::before {
  content: "";
  position: absolute;
  inset: 1px 2px;
  border: 1px solid #3a3c3e;
  border-radius: 4px;
  background: #2d3032;
}
.current svg { position: relative; }
.current::after { width: 15px; background: #4cc2ff; }

.tray { display: flex; align-items: center; margin-left: auto; line-height: 15px; }
.chevron { width: 24px; height: 40px; }
.lang { width: 48px; text-align: center; }
.status { gap: 6px; margin-left: 3px; }
.clock { width: 75px; justify-content: flex-end; text-align: right; }
.bell { margin-left: 7px; }
.copilot { position: relative; margin-left: 15px; }
.pre {
  position: absolute;
  right: 1px;
  bottom: 0;
  padding: 0 2px;
  border-radius: 2px;
  background: #fdc113;
  color: #2b2200;
  font-size: 7px;
  font-weight: 700;
  line-height: 8px;
}
```
